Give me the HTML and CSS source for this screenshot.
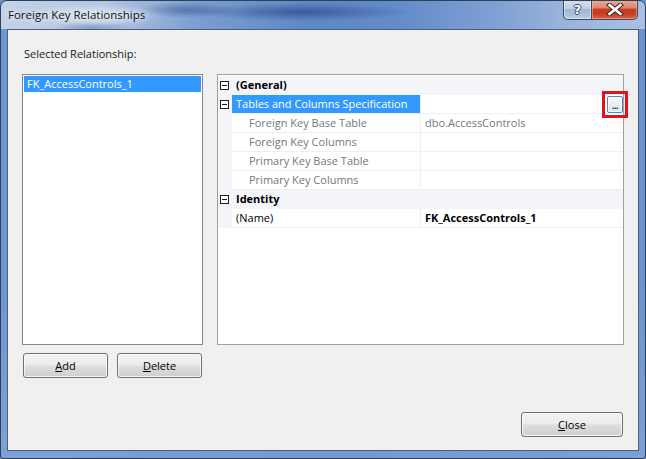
FILE: index.html
```html
<!DOCTYPE html>
<html>
<head>
<meta charset="utf-8">
<title>Foreign Key Relationships</title>
<link rel="stylesheet" href="styles.css">
</head>
<body>
<div class="window">
  <div class="titlebar">
    <span class="title">Foreign Key Relationships</span>
    <div class="caption">
      <div class="cap help"><span class="q">?</span></div>
      <div class="cap close">
        <svg width="18" height="13" viewBox="0 0 18 13">
          <path d="M3.5 2 L14.5 11 M14.5 2 L3.5 11" stroke="#4a2a24" stroke-width="4.8" stroke-linecap="square"/>
          <path d="M3.5 2 L14.5 11 M14.5 2 L3.5 11" stroke="#ffffff" stroke-width="2.6" stroke-linecap="square"/>
        </svg>
      </div>
    </div>
  </div>
  <div class="client">
    <div class="label">Selected Relationship:</div>
    <div class="main">
      <div class="left">
        <div class="listbox">
          <div class="item selected">FK_AccessControls_1</div>
        </div>
        <div class="btnrow">
          <button class="btn"><u>A</u>dd</button>
          <button class="btn"><u>D</u>elete</button>
        </div>
      </div>
      <div class="propgrid">
        <div class="row cat">
          <div class="gutter"><span class="minus"></span></div>
          <div class="cat-text">(General)</div>
        </div>
        <div class="row">
          <div class="gutter"><span class="minus"></span></div>
          <div class="name selected">Tables and Columns Specification</div>
          <div class="value"><span class="ellipsis">...</span></div>
        </div>
        <div class="row">
          <div class="gutter"></div>
          <div class="name sub">Foreign Key Base Table</div>
          <div class="value dim">dbo.AccessControls</div>
        </div>
        <div class="row">
          <div class="gutter"></div>
          <div class="name sub">Foreign Key Columns</div>
          <div class="value"></div>
        </div>
        <div class="row">
          <div class="gutter"></div>
          <div class="name sub">Primary Key Base Table</div>
          <div class="value"></div>
        </div>
        <div class="row">
          <div class="gutter"></div>
          <div class="name sub">Primary Key Columns</div>
          <div class="value"></div>
        </div>
        <div class="row cat">
          <div class="gutter"><span class="minus"></span></div>
          <div class="cat-text">Identity</div>
        </div>
        <div class="row">
          <div class="gutter"></div>
          <div class="name">(Name)</div>
          <div class="value strong">FK_AccessControls_1</div>
        </div>
        <div class="annot"></div>
      </div>
    </div>
    <div class="footer">
      <button class="btn btn-close"><u>C</u>lose</button>
    </div>
  </div>
</div>
</body>
</html>
```

FILE: styles.css
```css
html, body {
  margin: 0;
  padding: 0;
  background: #6b93cd;
}

body {
  font-family: "Open Sans", "Noto Sans", sans-serif;
  font-size: 11px;
  color: #000;
}

.window {
  width: 646px;
  height: 459px;
  box-sizing: border-box;
  border: 1px solid #2e3f5a;
  border-radius: 7px 7px 3px 3px;
  padding: 0 6px 7px 6px;
  display: flex;
  flex-direction: column;
  overflow: hidden;
  background:
    linear-gradient(180deg, rgba(255,255,255,0) 0%, rgba(255,255,255,0) 60%, rgba(150,185,230,0.35) 100%),
    linear-gradient(90deg, #6f95cd 0%, #5f8ac8 50%, #6c93cd 100%);
}

/* ---------- title bar ---------- */
.titlebar {
  height: 28px;
  margin: 0 -6px;
  padding: 0 7px 0 7px;
  display: flex;
  align-items: flex-start;
  justify-content: space-between;
  background:
    radial-gradient(ellipse 70px 11px at 95px 14px, rgba(255,255,255,0.55), rgba(255,255,255,0)),
    radial-gradient(ellipse 110px 9px at 300px 11px, rgba(30,55,115,0.55), rgba(30,55,115,0)),
    radial-gradient(ellipse 50px 8px at 185px 9px, rgba(35,65,125,0.45), rgba(35,65,125,0)),
    radial-gradient(ellipse 40px 6px at 90px 27px, rgba(40,75,140,0.35), rgba(40,75,140,0)),
    linear-gradient(90deg, #c3d2e7 0%, #b4c7e2 16%, #7c9fd1 30%, #5d87c5 48%, #638cc8 62%, #7e9fd3 76%, #9ab4dc 88%, #a9c0e2 100%);
}

.title {
  margin-top: 6px;
  font-size: 11.5px;
  line-height: 16px;
  color: #101010;
  text-shadow: 0 0 6px rgba(255,255,255,0.9), 0 0 10px rgba(255,255,255,0.6);
}

.caption {
  display: flex;
  margin-top: -1px;
}

.cap {
  height: 20px;
  box-sizing: border-box;
  border: 1px solid #3a4b66;
  border-top: none;
  display: flex;
  align-items: center;
  justify-content: center;
}

.help {
  width: 28px;
  border-right: none;
  border-radius: 0 0 0 5px;
  background: linear-gradient(180deg, #d6e0ee 0%, #c0cfe3 45%, #a3b8d5 50%, #aec3de 85%, #c3d4ea 100%);
  box-shadow: inset 0 0 0 1px rgba(255,255,255,0.45);
}

.q {
  font-family: "DejaVu Sans", sans-serif;
  font-weight: bold;
  font-size: 13px;
  line-height: 13px;
  color: #fff;
  text-shadow: 1px 0 0 #3b4a60, -1px 0 0 #3b4a60, 0 1px 0 #3b4a60, 0 -1px 0 #3b4a60;
}

.close {
  width: 47px;
  border-radius: 0 0 5px 0;
  background: linear-gradient(180deg, #eaab9a 0%, #df8670 40%, #c93c22 50%, #c8391f 70%, #d9644a 100%);
  box-shadow: inset 0 0 0 1px rgba(255,210,200,0.45);
}

/* ---------- client area ---------- */
.client {
  flex: 1;
  border: 1px solid #4d5f7b;
  background: #f0f0f0;
  padding: 16px 14px 0 14px;
  display: flex;
  flex-direction: column;
}

.label {
  height: 16px;
  line-height: 16px;
  margin-left: 2px;
  margin-bottom: 12px;
  color: #1a1a1a;
}

.main {
  display: grid;
  grid-template-columns: 181px 407px;
  column-gap: 14px;
}

.left {
  display: flex;
  flex-direction: column;
}

.listbox {
  height: 271px;
  box-sizing: border-box;
  border: 1px solid #828790;
  background: #fff;
  padding: 1px;
}

.item {
  height: 16px;
  line-height: 16px;
  padding-left: 3px;
}

.item.selected {
  background: #3399ff;
  color: #fff;
}

.btnrow {
  display: flex;
  gap: 9px;
  margin-top: 8px;
  padding-left: 1px;
}

.btn {
  width: 85px;
  height: 25px;
  box-sizing: border-box;
  border: 1px solid #707070;
  border-radius: 3px;
  background: linear-gradient(180deg, #f3f3f3 0%, #ebebeb 48%, #dddddd 52%, #cfcfcf 100%);
  box-shadow: inset 0 0 0 1px rgba(255,255,255,0.75);
  font-family: "Open Sans", "Noto Sans", sans-serif;
  font-size: 11px;
  color: #000;
  padding: 0;
  line-height: 22px;
}

.footer {
  display: flex;
  justify-content: flex-end;
  margin-top: 34px;
  padding-right: 1px;
}

.btn-close {
  width: 102px;
}

/* ---------- property grid ---------- */
.propgrid {
  position: relative;
  height: 271px;
  box-sizing: border-box;
  border: 1px solid #a0a0a0;
  background: #fff;
  padding-top: 1px;
}

.row {
  display: flex;
  height: 19px;
  line-height: 18px;
}

.gutter {
  width: 14px;
  flex: none;
  background: #f3f5f9;
  display: flex;
  align-items: center;
  padding-left: 2px;
  box-sizing: border-box;
}

.minus {
  width: 9px;
  height: 9px;
  box-sizing: border-box;
  border: 1px solid #1e1e1e;
  background: #fff;
  position: relative;
  margin-top: -1px;
}

.minus::after {
  content: "";
  position: absolute;
  left: 1px;
  top: 3px;
  width: 5px;
  height: 1px;
  background: #1e1e1e;
}

.row.cat {
  background: #f3f5f9;
}

.cat-text {
  padding-left: 4px;
  font-weight: bold;
}

.name {
  width: 189px;
  flex: none;
  box-sizing: border-box;
  padding-left: 4px;
  border-bottom: 1px solid #eef0f4;
  border-right: 1px solid #eef0f4;
  white-space: nowrap;
}

.name.selected {
  background: #3399ff;
  color: #fff;
}

.name.sub {
  padding-left: 17px;
  color: #777;
}

.value {
  flex: 1;
  box-sizing: border-box;
  padding-left: 4px;
  border-bottom: 1px solid #eef0f4;
  display: flex;
  justify-content: flex-start;
}

.value.dim {
  color: #777;
}

.value.strong {
  font-weight: bold;
}

.ellipsis {
  margin-left: auto;
  margin-top: 1px;
  width: 16px;
  height: 17px;
  box-sizing: border-box;
  border: 1px solid #4f88c0;
  border-radius: 2px;
  background: linear-gradient(180deg, #f6fafd 0%, #e6f0f9 50%, #d6e6f4 100%);
  box-shadow: inset 0 0 0 1px rgba(255,255,255,0.8);
  font-size: 9px;
  line-height: 17px;
  text-align: center;
  color: #1a1a1a;
  letter-spacing: -0.5px;
  font-weight: bold;
}

.annot {
  position: absolute;
  left: 384px;
  top: 16px;
  width: 26px;
  height: 27px;
  box-sizing: border-box;
  border: 3px solid #e0121f;
}
```
